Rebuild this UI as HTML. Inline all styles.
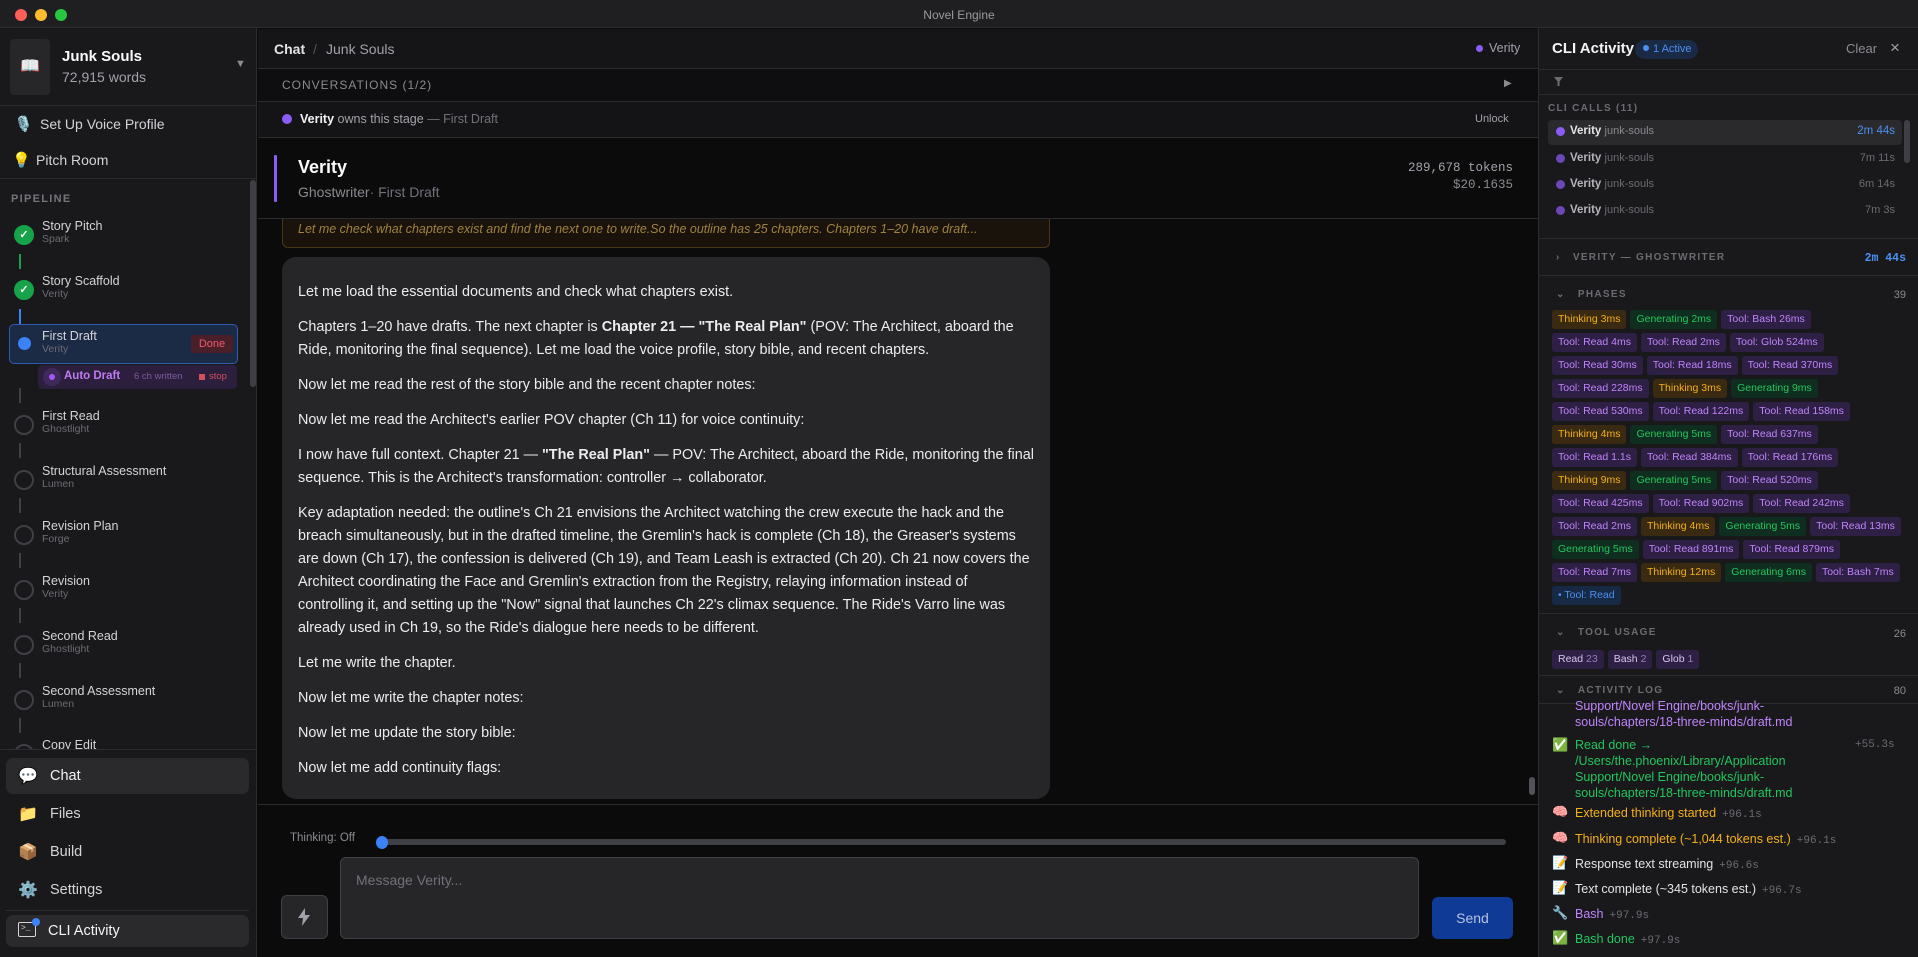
<!DOCTYPE html>
<html><head><meta charset="utf-8"><style>
*{box-sizing:border-box;margin:0;padding:0}
body{width:1918px;height:957px;background:#0b0b0c;font-family:"Liberation Sans",sans-serif;color:#e4e4e7;position:relative;overflow:hidden}
.a{position:absolute;white-space:nowrap}
.hl{position:absolute;height:1px;background:#2c2c30}
.tb{left:0;top:0;width:1918px;height:28px;background:#1f1f22;border-bottom:1px solid #2c2c30}
.dot{position:absolute;width:12px;height:12px;border-radius:50%;top:15px}
#side{position:absolute;left:0;top:28px;width:257px;height:929px;background:#19191c;border-right:1px solid #2c2c30}
.st .t{font-size:12.5px;color:#d4d4d8}
.st .s{font-size:10.5px;color:#6b6b72}
.circ{position:absolute;left:14px;width:20px;height:20px;border-radius:50%;border:2px solid #3f3f46}
.vl{position:absolute;left:19px;width:2px;height:15px;background:#3f3f46}
.nav{position:absolute;left:6px;width:243px;height:36px;border-radius:7px;font-size:14.5px;color:#d4d4d8}
.nav span{position:absolute;top:10px}
#right{position:absolute;left:1538px;top:28px;width:380px;height:929px;background:#19191c;border-left:1px solid #2c2c30;overflow:hidden}
.sec{font-size:10px;letter-spacing:1.3px;color:#6b6b72;font-weight:bold}
.row{position:absolute;left:13px;display:flex;gap:4px}
.c{height:19px;line-height:19px;padding:0 6px;border-radius:3px;font-size:10.5px;white-space:nowrap}
.th{background:#3a2a12;color:#f5b014}.ge{background:#0f2e1f;color:#22c55e}.to{background:#2e1f45;color:#c084fc}
.lg{position:absolute;left:36px;font-size:12.5px;line-height:16px}
.tm{color:#6b6b72;font-family:"Liberation Mono",monospace;font-size:11px;margin-left:6px}
.ic{position:absolute;left:13px;font-size:13px}
.msg p{margin:0 0 12px 0}
</style></head><body>
<div class="a tb"></div>
<div class="dot" style="left:15px;top:9px;background:#fe5f57"></div>
<div class="dot" style="left:35px;top:9px;background:#febc2e"></div>
<div class="dot" style="left:55px;top:9px;background:#28c840"></div>
<div class="a" style="left:0;width:1918px;text-align:center;top:8px;font-size:12px;color:#9a9aa0">Novel Engine</div>

<div id="side">
 <div class="a" style="left:10px;top:11px;width:40px;height:56px;background:#27272a;border-radius:4px;text-align:center;line-height:56px;font-size:16px">📖</div>
 <div class="a" style="left:62px;top:20px;font-size:15px;font-weight:bold;color:#fafafa">Junk Souls</div>
 <div class="a" style="left:62px;top:41px;font-size:14px;color:#a1a1aa">72,915 words</div>
 <div class="a" style="left:235px;top:30px;font-size:11px;color:#8a8a90">▼</div>
 <div class="hl" style="left:0;top:77px;width:257px"></div>
 <div class="a" style="left:14px;top:87px;font-size:15px">🎙️</div>
 <div class="a" style="left:40px;top:88px;font-size:14px;color:#d4d4d8">Set Up Voice Profile</div>
 <div class="a" style="left:12px;top:123px;font-size:15px">💡</div>
 <div class="a" style="left:36px;top:124px;font-size:14px;color:#d4d4d8">Pitch Room</div>
 <div class="hl" style="left:0;top:150px;width:257px"></div>
 <div class="a" style="left:250px;top:152px;width:6px;height:207px;background:#3f3f46;border-radius:3px"></div>
 <div class="a sec" style="left:11px;top:165px;font-size:11px;color:#74747b">PIPELINE</div>

 <div class="circ" style="top:197px;background:#16a34a;border-color:#16a34a;color:#fff;font-size:11px;text-align:center;line-height:16px;font-weight:bold">✓</div>
 <div class="a st" style="left:42px;top:191px"><div class="t">Story Pitch</div><div class="s">Spark</div></div>
 <div class="vl" style="top:226px;background:#16a34a"></div>
 <div class="circ" style="top:252px;background:#16a34a;border-color:#16a34a;color:#fff;font-size:11px;text-align:center;line-height:16px;font-weight:bold">✓</div>
 <div class="a st" style="left:42px;top:246px"><div class="t">Story Scaffold</div><div class="s">Verity</div></div>
 <div class="vl" style="top:281px;background:#3b82f6"></div>
 <div class="a" style="left:9px;top:296px;width:229px;height:40px;background:#1b2a45;border:1px solid #2d5bb0;border-radius:5px"></div>
 <div class="a" style="left:18px;top:309px;width:13px;height:13px;border-radius:50%;background:#3b82f6"></div>
 <div class="a st" style="left:42px;top:301px"><div class="t">First Draft</div><div class="s">Verity</div></div>
 <div class="a" style="left:191px;top:307px;width:42px;height:18px;background:#4a1f2a;color:#f05a6a;border-radius:3px;font-size:11px;text-align:center;line-height:18px">Done</div>
 <div class="a" style="left:38px;top:337px;width:199px;height:24px;background:#2c1f3d;border-radius:4px"></div>
 <div class="a" style="left:43px;top:340px;width:18px;height:18px;border-radius:50%;background:#3d2a5a"></div>
 <div class="a" style="left:49px;top:346px;width:6px;height:6px;border-radius:50%;background:#a855f7"></div>
 <div class="a" style="left:64px;top:342px;font-size:11.5px;color:#c17af0;font-weight:bold">Auto Draft</div>
 <div class="a" style="left:134px;top:343px;font-size:9.5px;color:#7c5a9e">6 ch written</div>
 <div class="a" style="left:199px;top:346px;width:6px;height:6px;background:#d0505e"></div>
 <div class="a" style="left:209px;top:343px;font-size:9.5px;color:#d0505e">stop</div>

 <div class="vl" style="top:360px"></div>
 <div class="circ" style="top:387px"></div>
 <div class="a st" style="left:42px;top:381px"><div class="t">First Read</div><div class="s">Ghostlight</div></div>
 <div class="vl" style="top:415px"></div>
 <div class="circ" style="top:442px"></div>
 <div class="a st" style="left:42px;top:436px"><div class="t">Structural Assessment</div><div class="s">Lumen</div></div>
 <div class="vl" style="top:470px"></div>
 <div class="circ" style="top:497px"></div>
 <div class="a st" style="left:42px;top:491px"><div class="t">Revision Plan</div><div class="s">Forge</div></div>
 <div class="vl" style="top:525px"></div>
 <div class="circ" style="top:552px"></div>
 <div class="a st" style="left:42px;top:546px"><div class="t">Revision</div><div class="s">Verity</div></div>
 <div class="vl" style="top:580px"></div>
 <div class="circ" style="top:607px"></div>
 <div class="a st" style="left:42px;top:601px"><div class="t">Second Read</div><div class="s">Ghostlight</div></div>
 <div class="vl" style="top:635px"></div>
 <div class="circ" style="top:662px"></div>
 <div class="a st" style="left:42px;top:656px"><div class="t">Second Assessment</div><div class="s">Lumen</div></div>
 <div class="vl" style="top:690px"></div>
 <div class="a" style="left:0;top:711px;width:256px;height:10px;overflow:hidden"><div class="circ" style="top:5px"></div><div class="a st" style="left:42px;top:-1px"><div class="t">Copy Edit</div></div></div>
 <div class="hl" style="left:0;top:721px;width:257px"></div>
 <div class="nav" style="top:730px;background:#2a2a2d"><span style="left:12px;font-size:16px;top:8px">💬</span><span style="left:44px;color:#f4f4f5">Chat</span></div>
 <div class="nav" style="top:768px"><span style="left:12px;font-size:16px;top:8px">📁</span><span style="left:44px">Files</span></div>
 <div class="nav" style="top:806px"><span style="left:12px;font-size:16px;top:8px">📦</span><span style="left:44px">Build</span></div>
 <div class="nav" style="top:844px"><span style="left:12px;font-size:16px;top:8px">⚙️</span><span style="left:44px">Settings</span></div>
 <div class="hl" style="left:6px;top:882px;width:243px"></div>
 <div class="nav" style="top:887px;height:32px;background:#2a2a2d"><span style="left:12px;top:7px;width:18px;height:15px;border:1.5px solid #d4d4d8;border-radius:2px;font-size:8px;line-height:11px;padding-left:2px;font-family:'Liberation Mono',monospace">&gt;_</span><span style="left:26px;top:3px;width:8px;height:8px;border-radius:50%;background:#3b82f6"></span><span style="left:42px;top:8px;color:#f4f4f5">CLI Activity</span></div>
</div>

<!-- main -->
<div class="a" style="left:258px;top:29px;width:1280px;height:39px;background:#151518"></div>
<div class="a" style="left:274px;top:41px;font-size:14px;color:#e4e4e7;font-weight:bold">Chat</div>
<div class="a" style="left:313px;top:41px;font-size:14px;color:#52525b">/</div>
<div class="a" style="left:326px;top:41px;font-size:14px;color:#a1a1aa">Junk Souls</div>
<div class="a" style="left:1476px;top:45px;width:7px;height:7px;border-radius:50%;background:#8b5cf6"></div>
<div class="a" style="left:1489px;top:41px;font-size:12.5px;color:#a1a1aa">Verity</div>
<div class="hl" style="left:258px;top:68px;width:1280px"></div>
<div class="a" style="left:258px;top:69px;width:1280px;height:32px;background:#0e0e10"></div>
<div class="a" style="left:282px;top:78px;font-size:12px;letter-spacing:1px;color:#8a8a90">CONVERSATIONS (1/2)</div>
<div class="a" style="left:1504px;top:78px;font-size:10px;color:#8a8a90">▶</div>
<div class="hl" style="left:258px;top:101px;width:1280px"></div>
<div class="a" style="left:258px;top:102px;width:1280px;height:35px;background:#141416"></div>
<div class="a" style="left:282px;top:114px;width:10px;height:10px;border-radius:50%;background:#8b5cf6"></div>
<div class="a" style="left:300px;top:112px;font-size:12.5px;color:#a1a1aa"><b style="color:#f4f4f5">Verity</b> owns this stage <span style="color:#71717a">— First Draft</span></div>
<div class="a" style="left:1475px;top:113px;font-size:11px;color:#a1a1aa">Unlock</div>
<div class="hl" style="left:258px;top:137px;width:1280px"></div>
<div class="a" style="left:274px;top:155px;width:3px;height:47px;background:#8b5cf6;border-radius:1px"></div>
<div class="a" style="left:298px;top:157px;font-size:18px;font-weight:bold;color:#fafafa">Verity</div>
<div class="a" style="left:298px;top:184px;font-size:14px;color:#8a8a90">Ghostwriter<span style="color:#71717a">· First Draft</span></div>
<div class="a" style="left:1300px;width:213px;text-align:right;top:161px;font-size:12.5px;color:#a1a1aa;font-family:'Liberation Mono',monospace">289,678 tokens</div>
<div class="a" style="left:1300px;width:213px;text-align:right;top:178px;font-size:12.5px;color:#8a8a90;font-family:'Liberation Mono',monospace">$20.1635</div>
<div class="a" style="left:282px;top:219px;width:768px;height:29px;background:#1a130c;border:1px solid #4a3517;border-top:none;border-radius:0 0 6px 6px;overflow:hidden"><div class="a" style="left:15px;top:3px;font-size:12.5px;font-style:italic;color:#a0813f">Let me check what chapters exist and find the next one to write.So the outline has 25 chapters. Chapters 1–20 have draft...</div></div>
<div class="hl" style="left:258px;top:218px;width:1280px"></div>
<div class="a msg" style="left:282px;top:257px;width:768px;height:542px;background:#262629;border-radius:14px;padding:24px 15px 0 16px;white-space:normal;font-size:14.4px;line-height:23px;color:#ececef">
<p>Let me load the essential documents and check what chapters exist.</p>
<p>Chapters 1–20 have drafts. The next chapter is <b>Chapter 21 — "The Real Plan"</b> (POV: The Architect, aboard the Ride, monitoring the final sequence). Let me load the voice profile, story bible, and recent chapters.</p>
<p>Now let me read the rest of the story bible and the recent chapter notes:</p>
<p>Now let me read the Architect's earlier POV chapter (Ch 11) for voice continuity:</p>
<p>I now have full context. Chapter 21 — <b>"The Real Plan"</b> — POV: The Architect, aboard the Ride, monitoring the final sequence. This is the Architect's transformation: controller → collaborator.</p>
<p>Key adaptation needed: the outline's Ch 21 envisions the Architect watching the crew execute the hack and the breach simultaneously, but in the drafted timeline, the Gremlin's hack is complete (Ch 18), the Greaser's systems are down (Ch 17), the confession is delivered (Ch 19), and Team Leash is extracted (Ch 20). Ch 21 now covers the Architect coordinating the Face and Gremlin's extraction from the Registry, relaying information instead of controlling it, and setting up the "Now" signal that launches Ch 22's climax sequence. The Ride's Varro line was already used in Ch 19, so the Ride's dialogue here needs to be different.</p>
<p>Let me write the chapter.</p>
<p>Now let me write the chapter notes:</p>
<p>Now let me update the story bible:</p>
<p>Now let me add continuity flags:</p>
</div>
<div class="a" style="left:1529px;top:777px;width:6px;height:18px;background:#52525b;border-radius:3px"></div>
<div class="hl" style="left:258px;top:804px;width:1280px"></div>
<div class="a" style="left:290px;top:832px;font-size:11.5px;color:#8a8a90">Thinking: Off</div>
<div class="a" style="left:382px;top:839px;width:1124px;height:6px;background:#3f3f46;border-radius:3px"></div>
<div class="a" style="left:376px;top:836px;width:12px;height:13px;border-radius:50%;background:#3b82f6"></div>
<div class="a" style="left:340px;top:857px;width:1079px;height:82px;background:#262629;border:1px solid #3f3f46;border-radius:6px"></div>
<div class="a" style="left:356px;top:872px;font-size:14px;color:#71717a">Message Verity...</div>
<div class="a" style="left:281px;top:895px;width:47px;height:44px;background:#262629;border:1px solid #3f3f46;border-radius:6px"></div>
<svg class="a" style="left:297px;top:908px" width="14" height="18" viewBox="0 0 14 18"><path d="M8 0 L1 10 H6 L5 18 L13 7 H8 Z" fill="#a1a1aa"/></svg>
<div class="a" style="left:1432px;top:897px;width:81px;height:42px;background:#0f3a96;border-radius:6px;text-align:center;line-height:42px;font-size:14px;color:#b7c4e0">Send</div>

<!-- right -->
<div id="right">
 <div class="a" style="left:13px;top:12px;font-size:15px;font-weight:bold;color:#f4f4f5">CLI Activity</div>
 <div class="a" style="left:96px;top:12px;width:63px;height:19px;background:#1a2a45;border-radius:10px;font-size:11px;color:#4a90f0;line-height:19px;padding-left:8px"><span style="display:inline-block;width:6px;height:6px;border-radius:50%;background:#4a90f0;margin-right:4px;vertical-align:1px"></span>1 Active</div>
 <div class="a" style="left:307px;top:13px;font-size:13px;color:#8a8a90">Clear</div>
 <div class="a" style="left:351px;top:10px;font-size:17px;color:#a1a1aa">×</div>
 <div class="hl" style="left:0;top:41px;width:380px"></div>
 <svg class="a" style="left:15px;top:49px" width="9" height="9"><path d="M0 0H9L5.5 4.5V9H3.5V4.5Z" fill="#6b6b72"/></svg>
 <div class="hl" style="left:0;top:66px;width:380px"></div>
 <div class="a sec" style="left:9px;top:75px">CLI CALLS (11)</div>
 <div class="a" style="left:9px;top:92px;width:354px;height:25px;background:#2a2a2d;border-radius:4px"></div>
 <div class="a" style="left:365px;top:92px;width:6px;height:43px;background:#3f3f46;border-radius:3px"></div>
 <div class="a" style="left:17px;top:99px;width:9px;height:9px;border-radius:50%;background:#8b5cf6"></div>
 <div class="a" style="left:31px;top:97px;font-size:11.5px"><b style="color:#e4e4e7">Verity</b> <span style="color:#8a8a90;font-size:11px">junk-souls</span></div>
 <div class="a" style="left:300px;width:56px;text-align:right;top:97px;font-size:11.5px;color:#4a90f0">2m 44s</div>
 <div class="a" style="left:17px;top:126px;width:9px;height:9px;border-radius:50%;background:#6d46b8"></div>
 <div class="a" style="left:31px;top:124px;font-size:11.5px"><b style="color:#b4b4bb">Verity</b> <span style="color:#6b6b72;font-size:11px">junk-souls</span></div>
 <div class="a" style="left:300px;width:56px;text-align:right;top:124px;font-size:11px;color:#6b6b72">7m 11s</div>
 <div class="a" style="left:17px;top:152px;width:9px;height:9px;border-radius:50%;background:#6d46b8"></div>
 <div class="a" style="left:31px;top:150px;font-size:11.5px"><b style="color:#b4b4bb">Verity</b> <span style="color:#6b6b72;font-size:11px">junk-souls</span></div>
 <div class="a" style="left:300px;width:56px;text-align:right;top:150px;font-size:11px;color:#6b6b72">6m 14s</div>
 <div class="a" style="left:17px;top:178px;width:9px;height:9px;border-radius:50%;background:#6d46b8"></div>
 <div class="a" style="left:31px;top:176px;font-size:11.5px"><b style="color:#b4b4bb">Verity</b> <span style="color:#6b6b72;font-size:11px">junk-souls</span></div>
 <div class="a" style="left:300px;width:56px;text-align:right;top:176px;font-size:11px;color:#6b6b72">7m 3s</div>
 <div class="hl" style="left:0;top:210px;width:380px"></div>
 <div class="a sec" style="left:17px;top:224px">›&nbsp;&nbsp;&nbsp;VERITY — GHOSTWRITER</div>
 <div class="a" style="left:300px;width:67px;text-align:right;top:224px;font-size:11.5px;color:#4a90f0;font-family:'Liberation Mono',monospace;font-weight:bold">2m 44s</div>
 <div class="hl" style="left:0;top:247px;width:380px"></div>
 <div class="a sec" style="left:17px;top:261px">⌄&nbsp;&nbsp;&nbsp;PHASES</div>
 <div class="a" style="left:330px;width:37px;text-align:right;top:261px;font-size:11px;color:#8a8a90">39</div>
 <div class="row" style="top:282px"><span class="c th">Thinking 3ms</span><span class="c ge">Generating 2ms</span><span class="c to">Tool: Bash 26ms</span></div>
 <div class="row" style="top:305px"><span class="c to">Tool: Read 4ms</span><span class="c to">Tool: Read 2ms</span><span class="c to">Tool: Glob 524ms</span></div>
 <div class="row" style="top:328px"><span class="c to">Tool: Read 30ms</span><span class="c to">Tool: Read 18ms</span><span class="c to">Tool: Read 370ms</span></div>
 <div class="row" style="top:351px"><span class="c to">Tool: Read 228ms</span><span class="c th">Thinking 3ms</span><span class="c ge">Generating 9ms</span></div>
 <div class="row" style="top:374px"><span class="c to">Tool: Read 530ms</span><span class="c to">Tool: Read 122ms</span><span class="c to">Tool: Read 158ms</span></div>
 <div class="row" style="top:397px"><span class="c th">Thinking 4ms</span><span class="c ge">Generating 5ms</span><span class="c to">Tool: Read 637ms</span></div>
 <div class="row" style="top:420px"><span class="c to">Tool: Read 1.1s</span><span class="c to">Tool: Read 384ms</span><span class="c to">Tool: Read 176ms</span></div>
 <div class="row" style="top:443px"><span class="c th">Thinking 9ms</span><span class="c ge">Generating 5ms</span><span class="c to">Tool: Read 520ms</span></div>
 <div class="row" style="top:466px"><span class="c to">Tool: Read 425ms</span><span class="c to">Tool: Read 902ms</span><span class="c to">Tool: Read 242ms</span></div>
 <div class="row" style="top:489px"><span class="c to">Tool: Read 2ms</span><span class="c th">Thinking 4ms</span><span class="c ge">Generating 5ms</span><span class="c to">Tool: Read 13ms</span></div>
 <div class="row" style="top:512px"><span class="c ge">Generating 5ms</span><span class="c to">Tool: Read 891ms</span><span class="c to">Tool: Read 879ms</span></div>
 <div class="row" style="top:535px"><span class="c to">Tool: Read 7ms</span><span class="c th">Thinking 12ms</span><span class="c ge">Generating 6ms</span><span class="c to">Tool: Bash 7ms</span></div>
 <div class="row" style="top:558px"><span class="c" style="background:#172a45;color:#4a90f0">• Tool: Read</span></div>
 <div class="hl" style="left:0;top:585px;width:380px"></div>
 <div class="a sec" style="left:17px;top:599px">⌄&nbsp;&nbsp;&nbsp;TOOL USAGE</div>
 <div class="a" style="left:330px;width:37px;text-align:right;top:600px;font-size:11px;color:#8a8a90">26</div>
 <div class="row" style="top:622px"><span class="c to" style="color:#d8c6f0">Read <span style="color:#9a7cc0">23</span></span><span class="c to" style="color:#d8c6f0">Bash <span style="color:#9a7cc0">2</span></span><span class="c to" style="color:#d8c6f0">Glob <span style="color:#9a7cc0">1</span></span></div>
 <div class="hl" style="left:0;top:647px;width:380px"></div>
 <div class="a sec" style="left:17px;top:657px">⌄&nbsp;&nbsp;&nbsp;ACTIVITY LOG</div>
 <div class="a" style="left:330px;width:37px;text-align:right;top:657px;font-size:11px;color:#8a8a90">80</div>
 <div class="hl" style="left:0;top:675px;width:380px"></div>
 <div class="lg" style="top:670px;color:#c084fc">Support/Novel Engine/books/junk-<br>souls/chapters/18-three-minds/draft.md</div>
 <div class="ic" style="top:709px">✅</div>
 <div class="lg" style="top:709px;color:#22c55e">Read done →<br>/Users/the.phoenix/Library/Application<br>Support/Novel Engine/books/junk-<br>souls/chapters/18-three-minds/draft.md</div>
 <div class="a tm" style="left:310px;top:711px">+55.3s</div>
 <div class="ic" style="top:776px">🧠</div>
 <div class="lg" style="top:777px;color:#f5b014">Extended thinking started<span class="tm">+96.1s</span></div>
 <div class="ic" style="top:802px">🧠</div>
 <div class="lg" style="top:803px;color:#f5b014">Thinking complete (~1,044 tokens est.)<span class="tm">+96.1s</span></div>
 <div class="ic" style="top:827px">📝</div>
 <div class="lg" style="top:828px;color:#e4e4e7">Response text streaming<span class="tm">+96.6s</span></div>
 <div class="ic" style="top:852px">📝</div>
 <div class="lg" style="top:853px;color:#e4e4e7">Text complete (~345 tokens est.)<span class="tm">+96.7s</span></div>
 <div class="ic" style="top:877px">🔧</div>
 <div class="lg" style="top:878px;color:#c084fc">Bash<span class="tm">+97.9s</span></div>
 <div class="ic" style="top:902px">✅</div>
 <div class="lg" style="top:903px;color:#22c55e">Bash done<span class="tm">+97.9s</span></div>
</div>
</body></html>
